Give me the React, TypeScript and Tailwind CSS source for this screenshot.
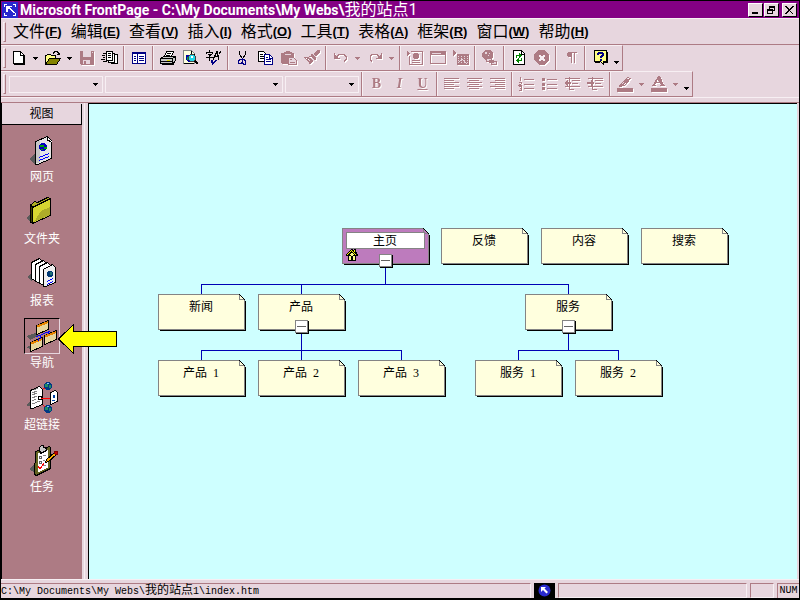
import { ReactNode, useState } from "react"

const SANS = "font-['Liberation_Sans','Noto_Sans_CJK_SC',sans-serif]"
const MONO = "font-['Liberation_Mono','Noto_Sans_CJK_SC',monospace]"

const DIM = "#ad7b84"

const MENUS = [
  ["文件", "F"],
  ["编辑", "E"],
  ["查看", "V"],
  ["插入", "I"],
  ["格式", "O"],
  ["工具", "T"],
  ["表格", "A"],
  ["框架", "R"],
  ["窗口", "W"],
  ["帮助", "H"],
]

type PageNode = {
  name: string
  num?: string
  x: number
  y: number
  home?: boolean
  open?: boolean
}

const NODES: PageNode[] = [
  { name: "主页", x: 253, y: 124, home: true, open: true },
  { name: "反馈", x: 352, y: 124 },
  { name: "内容", x: 452, y: 124 },
  { name: "搜索", x: 552, y: 124 },
  { name: "新闻", x: 69, y: 190 },
  { name: "产品", x: 169, y: 190, open: true },
  { name: "服务", x: 436, y: 190, open: true },
  { name: "产品", num: "1", x: 69, y: 256 },
  { name: "产品", num: "2", x: 169, y: 256 },
  { name: "产品", num: "3", x: 269, y: 256 },
  { name: "服务", num: "1", x: 386, y: 256 },
  { name: "服务", num: "2", x: 486, y: 256 },
]

/* ---------- toolbar pieces ---------- */

function Glyph({ children, dim }: { children: ReactNode; dim?: boolean }) {
  return (
    <svg
      viewBox="0 0 17 16"
      className={`h-4 w-[17px] ${dim ? "drop-shadow-[1px_1px_0_#fff]" : ""}`}
      shapeRendering="crispEdges"
      fill="none"
      stroke={dim ? DIM : "#000"}
    >
      {children}
    </svg>
  )
}

function Tool({ label, dim, children }: { label: string; dim?: boolean; children: ReactNode }) {
  return (
    <button
      type="button"
      aria-label={label}
      title={label}
      disabled={dim}
      className="flex h-6 w-[23px] shrink-0 items-center justify-center"
    >
      <Glyph dim={dim}>{children}</Glyph>
    </button>
  )
}

function Drop({ label, dim, low }: { label: string; dim?: boolean; low?: boolean }) {
  return (
    <button
      type="button"
      aria-label={label}
      disabled={dim}
      className={`flex h-6 w-[11px] shrink-0 justify-center ${low ? "items-end pb-1.5" : "items-center"}`}
    >
      <svg viewBox="0 0 5 3" className="h-[3px] w-[5px]" shapeRendering="crispEdges">
        <path d="M0 0h5v1H0zM1 1h3v1H1zM2 2h1v1H2z" fill={dim ? DIM : "#000"} />
      </svg>
    </button>
  )
}

function Sep() {
  return (
    <div className="flex w-[6px] shrink-0 justify-center self-stretch">
      <div className="w-0.5 border-l border-r border-l-[#ad7b84] border-r-[#f7eff3]" />
    </div>
  )
}

function Grip() {
  return (
    <div className="mr-px ml-0.5 h-5 w-[3px] shrink-0 border border-l-[#f7eff3] border-t-[#f7eff3] border-r-[#ad7b84] border-b-[#ad7b84]" />
  )
}

function Combo({ label, width }: { label: string; width: string }) {
  return (
    <div className={`relative h-[17px] shrink-0 border border-[#f7eff3] ${width}`}>
      <select
        aria-label={label}
        disabled
        className="block h-full w-full appearance-none bg-transparent text-xs"
      />
      <svg
        viewBox="0 0 5 3"
        className="pointer-events-none absolute top-1.5 right-1 h-[3px] w-[5px]"
        shapeRendering="crispEdges"
      >
        <path d="M0 0h5v1H0zM1 1h3v1H1zM2 2h1v1H2z" />
      </svg>
    </div>
  )
}

function StandardBar() {
  return (
    <div
      role="toolbar"
      aria-label="常用"
      className="flex h-[26px] w-fit items-center border-t border-r border-b border-t-[#f7eff3] border-r-[#ad7b84] border-b-[#ad7b84]"
    >
      <Grip />
      <Tool label="新建">
        <path d="M3.5 1.5h7l3 3v9h-10z" fill="#fff" />
        <path d="M10.5 1.5V5h3M14.5 5v9.5h-11" />
      </Tool>
      <Drop label="新建选项" />
      <Tool label="打开">
        <path d="M1.5 13.5v-8h1l1-1h3l1 1h4v3" fill="#ffff84" />
        <path d="M1.5 14.5l4-6h11l-4 6z" fill="#848400" />
        <path d="M9.5 3.5v-1h1v-1h3v1h1v2M12.5 4.5h3M15.5 2.5v2" />
      </Tool>
      <Drop label="打开选项" />
      <Tool label="保存" dim>
        <path d="M2 1h14v14H3l-1-1z" fill={DIM} stroke="none" />
        <path d="M5 1h8v6H5z" fill="#e7d6de" stroke="none" />
        <path d="M5 10h7v4H5zM14 2h1v1h-1z" fill="#e7d6de" stroke="none" />
        <path d="M6 11h2v3H6z" fill={DIM} stroke="none" />
      </Tool>
      <Tool label="发布站点">
        <path d="M10.5 4.5h6v9h-6z" fill="#fff" />
        <path d="M7.5 3.5h6v9h-6z" fill="#fff" />
        <path d="M5.5 1.5h6v9h-6z" fill="#fff" />
        <path d="M7 3.5h3M7 5.5h3M7 7.5h3M2 3.5h3M1 5.5h3M2 7.5h2M0 9.5h4M2 11.5h4" />
      </Tool>
      <Sep />
      <Tool label="文件夹列表">
        <path d="M2.5 2.5h13v11h-13z" fill="#fff" stroke="#000084" />
        <path d="M2 3.5h14M7.5 3v11" stroke="#000084" />
        <path d="M4 6.5h2M4 8.5h2M4 10.5h2" stroke="#000084" />
        <path d="M9 6.5h5M9 8.5h5M9 10.5h5" stroke="#000084" />
      </Tool>
      <Sep />
      <Tool label="打印">
        <path d="M5.5 6.5l2-5h7l-2 5z" fill="#fff" />
        <path d="M8 3.5h4M7 5.5h4" />
        <path d="M1.5 8.5l3-2h12v4l-3 3h-12z" fill="#c6c6c6" />
        <path d="M1.5 8.5h12v5M13.5 8.5l3-2M2 11.5h11M3 14.5h11l2-3" />
        <path d="M8 10.5h3" stroke="#d6d600" />
      </Tool>
      <Tool label="在浏览器中预览">
        <path d="M1.5 .5h8l3 3v10h-11z" fill="#ffffde" stroke="#848484" />
        <path d="M2 13.5h10M9.5 1v3h3" />
        <path d="M4 5h4v7H6l-2-2z" fill="#0000a5" stroke="none" />
        <path d="M5 7h2v3H5z" fill="#00a542" stroke="none" />
        <path d="M8.5 4.5h3l2 2v3l-2 2h-3l-2-2v-3z" fill="#21d6e7" stroke="#424242" />
        <path d="M9 6h2v2H9z" fill="#fff" stroke="none" />
        <path d="M13 11l3 3" strokeWidth="2" />
      </Tool>
      <Tool label="拼写检查">
        <path d="M4.5 0v2M1.5 4V2.5h6V4M3 4.5h3L4.5 6v4h-1M1 7.5h7" />
        <path d="M8 9.5l4-8 2 8M10 6.5h4M16 1l-2 3" />
        <path d="M6 10h2v2h1v-1h1v-1h2v1h-1v1h-1v1H9v1H8v1H7v-2H6z" fill="#000084" stroke="none" />
      </Tool>
      <Sep />
      <Tool label="剪切">
        <path d="M5.5 1v3l3 5M11.5 1v3l-3 5" />
        <path d="M8.5 8v1.5M7 9.5H5.5v1h-1v3h3v-1h1v-3H7M9 9.5h1.5v1h1v4h-2v-1h-1v-2" stroke="#000084" />
      </Tool>
      <Tool label="复制">
        <path d="M1.5 1.5h5l2 2v8h-7z" fill="#fff" />
        <path d="M3 4.5h3M3 6.5h4M3 8.5h4" />
        <path d="M7.5 4.5h5l3 3v7h-8z" fill="#fff" stroke="#000084" />
        <path d="M12.5 5v3h3M9 7.5h2M9 9.5h5M9 11.5h5" stroke="#000084" />
      </Tool>
      <Tool label="粘贴" dim>
        <path d="M1 3h3V2h2V1h4v1h2v1h2v5h-6v6H2l-1-1z" fill={DIM} stroke="none" />
        <path d="M5 4.5h6" stroke="#e7d6de" />
        <path d="M8.5 7.5h5l3 3v4h-8z" fill="#e7d6de" />
        <path d="M10 9.5h2M10 12.5h5" />
      </Tool>
      <Tool label="格式刷" dim>
        <path d="M14 0h3v2l-4 5-3-3z" fill={DIM} stroke="none" />
        <path d="M8 4h2l3 4v2h-2L8 6z" fill={DIM} stroke="none" />
        <path d="M1 7.5h5M2 8.5h1M4 8.5h4M3 9.5h2M6 9.5h3M4 10.5h2M7 10.5h3M5 11.5h5M6 12.5h3M6 13.5h2M6 6.5h2" />
      </Tool>
      <Sep />
      <Tool label="撤消" dim>
        <path d="M2.5 3v5.5H8M5 6.5l2-2h5l2 2v3l-2 2" />
        <path d="M3 5h1v1h1v1h1v1H3z" fill={DIM} stroke="none" />
      </Tool>
      <Drop label="撤消选项" dim />
      <Tool label="恢复" dim>
        <path d="M15.5 3v5.5H10M13 6.5l-2-2H6l-2 2v3l2 2" />
        <path d="M15 5h-1v1h-1v1h-1v1h3z" fill={DIM} stroke="none" />
      </Tool>
      <Drop label="恢复选项" dim />
      <Sep />
      <Tool label="插入组件" dim>
        <path d="M1 1h1v1h1v1h1v1H3v1H2v1H1z" fill={DIM} stroke="none" />
        <path d="M3.5 6v8.5h13v-13H5" />
        <path d="M8 3h4v1h1v4h-1v1H8V8H7V4h1z" fill={DIM} stroke="none" />
        <path d="M6 10.5h8M6 12.5h8" />
      </Tool>
      <Tool label="插入表格" dim>
        <path d="M1.5 1.5h15v12h-15z" />
        <path d="M1 1h16v4H1z" fill={DIM} stroke="none" />
        <path d="M3 3.5h9" stroke="#e7d6de" />
      </Tool>
      <Tool label="插入图片" dim>
        <path d="M1 0l4 3-4 3zM5 4h12v11H5z" fill={DIM} stroke="none" />
        <path
          d="M6 6.5h11M6 8.5h11M6 10.5h11M6 12.5h11"
          stroke="#e7d6de"
          strokeDasharray="1 2"
        />
        <path d="M6 13l4-4 5 5" stroke="#e7d6de" />
      </Tool>
      <Sep />
      <Tool label="超链接" dim>
        <path d="M4 0h5l3 3v4l-3 3H4L1 7V3z" fill={DIM} stroke="none" />
        <path d="M4 2h2v2H4z" fill="#e7d6de" stroke="none" />
        <path d="M8 3h1v1H8zM7 5h1v1H7z" fill="#e7d6de" stroke="none" />
        <path d="M5.5 8.5h5v3h-5zM10.5 11.5h5v3h-5z" fill="#e7d6de" />
        <path d="M8 10h5v3H8z" fill={DIM} stroke="none" />
      </Tool>
      <Sep />
      <Tool label="刷新">
        <path d="M3.5 .5h8l3 3v11h-11z" fill="#fff" />
        <path d="M11.5 1v3h3" />
        <path d="M6 5h3V3h1v1h1v1h1v1h-1v1h-1v1H9V6H7v2H6zM12 11H9v2H8v-1H7v-1H6v-1h1V9h1V8h1v2h2V8h1z" fill="#008400" stroke="none" />
      </Tool>
      <Tool label="停止" dim>
        <path d="M6 0h5l5 4v6l-5 5H6l-5-5V4z" fill={DIM} stroke="none" />
        <path d="M6 5h1v1h1v1h1V6h1V5h1v1h-1v1H9v1h1v1h1v1h-1V9H9V8H8v1H7v1H6V9h1V8h1V7H7V6H6z" fill="#fff" stroke="#f7eff3" />
      </Tool>
      <Sep />
      <Tool label="显示全部" dim>
        <path d="M6 2h9v1H6zM5 3h5v4H6L5 6zM9 3h1v10H9zM12 3h1v10h-1z" fill={DIM} stroke="none" />
      </Tool>
      <Sep />
      <Tool label="帮助">
        <path d="M3.5 .5h12v11h-3v3l-3-3h-6z" fill="#ffff84" />
        <path d="M4 12.5h5M16.5 2v10.5H13" />
        <path d="M6 3h1V2h5v1h1v3h-1v1h-1v1H9V6h1V5h1V4H8v1H6zM9 9h2v2H9z" fill="#000084" stroke="none" />
      </Tool>
      <Drop label="其他按钮" low />
    </div>
  )
}

function FormatBar() {
  const letter =
    "flex h-6 w-[23px] shrink-0 items-center justify-center font-['Liberation_Serif',serif] text-sm font-bold text-[#ad7b84] drop-shadow-[1px_1px_0_#fff]"
  return (
    <div
      role="toolbar"
      aria-label="格式"
      className="flex h-[26px] w-fit items-center border-t border-r border-b border-t-[#f7eff3] border-r-[#ad7b84] border-b-[#ad7b84]"
    >
      <Grip />
      <div className="ml-0.5 flex gap-0.5">
        <Combo label="样式" width="w-[94px]" />
        <Combo label="字体" width="w-[178px]" />
        <Combo label="字号" width="w-[74px]" />
      </div>
      <Sep />
      <button type="button" disabled className={letter}>B</button>
      <button type="button" disabled className={`${letter} italic`}>I</button>
      <button type="button" disabled className={`${letter} underline`}>U</button>
      <Sep />
      <Tool label="左对齐" dim>
        <path d="M1 2.5h15M1 4.5h10M1 6.5h15M1 8.5h10M1 10.5h15M1 12.5h10" />
      </Tool>
      <Tool label="居中" dim>
        <path d="M1 2.5h15M3 4.5h10M1 6.5h15M3 8.5h10M1 10.5h15M3 12.5h10" />
      </Tool>
      <Tool label="右对齐" dim>
        <path d="M1 2.5h15M6 4.5h10M1 6.5h15M6 8.5h10M1 10.5h15M6 12.5h10" />
      </Tool>
      <Sep />
      <Tool label="编号" dim>
        <path d="M6 3.5h10M6 8.5h10M6 12.5h10M2.5 1v4M1 6.5h2.5v1L1.5 9h2M1 10.5h2.5v4H1M2 12.5h1" />
      </Tool>
      <Tool label="项目符号" dim>
        <path d="M6 3.5h10M6 8.5h10M6 12.5h10" />
        <path d="M1 2h3v3H1zM1 7h3v3H1zM1 11h3v3H1z" fill={DIM} stroke="none" />
      </Tool>
      <Tool label="减少缩进" dim>
        <path d="M1 2.5h15M8 4.5h8M8 7.5h6M1 10.5h15M5 13.5h5M5.5 1v13" />
        <path d="M0 7l4-3v2h3v2H4v2z" fill={DIM} stroke="none" />
      </Tool>
      <Tool label="增加缩进" dim>
        <path d="M1 2.5h15M8 4.5h8M8 7.5h6M1 10.5h15M5 13.5h5M5.5 1v13" />
        <path d="M7 7L4 4v2H0v2h4v2z" fill={DIM} stroke="none" />
      </Tool>
      <Sep />
      <Tool label="突出显示" dim>
        <path d="M1 12h16v4H1z" fill={DIM} stroke="none" />
        <path d="M5.5 7.5l6-6 3 1-6 7-5 1z" />
        <path d="M4 8h4v2H3zM10 3h3L9 8H7z" fill={DIM} stroke="none" />
      </Tool>
      <Drop label="突出显示颜色" dim />
      <Tool label="字体颜色" dim>
        <path d="M1 12h16v4H1z" fill={DIM} stroke="none" />
        <path d="M8 0h2l4 9h1v1h-5V9h1l-1-2H6L5 9h1v1H2V9h1zM8 3L7 6h2z" fill={DIM} stroke="none" />
      </Tool>
      <Drop label="字体颜色选项" dim />
      <Drop label="其他按钮" low />
    </div>
  )
}

/* ---------- views bar icons ---------- */

function Globe({ x, y, r }: { x: number; y: number; r: number }) {
  return (
    <g>
      <circle cx={x} cy={y} r={r} fill="#003984" />
      <path d={`M${x - r + 1} ${y - 2}h3v3h-3zM${x + 1} ${y - 1}h2v3h-2z`} fill="#218c63" />
      <path d={`M${x - 1} ${y - r + 1}h2v1h-2z`} fill="#84c6ff" />
    </g>
  )
}

const ICONS: Record<string, ReactNode> = {
  page: (
    <>
      <path d="M5 27l6-5v10z" fill="#5a5a5a" />
      <path d="M11.5 9.5l12-5 4 4v18l-14 6h-2z" fill="#e7e7e7" stroke="#000" />
      <path d="M12 10l4-2v22l-3 1h-1z" fill="#c6c6c6" />
      <path d="M23.5 4.5v4l4 1" fill="#fff" stroke="#000" />
      <circle cx="19" cy="15" r="4" fill="#0000bd" />
      <path d="M16 13h4v2h-4zM20 15h3v2h-3zM17 17h2v1h-2z" fill="#00a500" />
      <path d="M15 25.5l10-4M15 28.5l10-4" stroke="#0000ff" />
    </>
  ),
  folder: (
    <>
      <path d="M2 24l5-4v8z" fill="#5a5a5a" />
      <path d="M6.5 11.5l4-4 3 1 10-5 3 1v6l-19 6z" fill="#adad21" stroke="#000" />
      <path d="M8.5 13.5l18-9v17l-18 8z" fill="#d6d631" stroke="#000" />
      <path d="M17 17l9-4v8l-16 7z" fill="#adad29" />
      <path d="M6.5 11v17l2 1V13z" fill="#424200" stroke="#000" />
    </>
  ),
  reports: (
    <>
      <path d="M3 21l5-4v9z" fill="#5a5a5a" />
      <path d="M7.5 6.5l8-4 3 3v15l-8 4-3-2z" fill="#fff" stroke="#000" />
      <path d="M11.5 8.5l8-4 3 3v15l-8 4-3-1z" fill="#fff" stroke="#000" />
      <path d="M15.5 10.5l8-4 3 3v15l-8 4-3-1z" fill="#fff" stroke="#000" />
      <path d="M19.5 13.5l9-5 3 3v15l-10 4h-2z" fill="#efefef" stroke="#000" />
      <circle cx="26" cy="18" r="3" fill="#003973" />
      <path d="M26 16h2v3h-2z" fill="#217373" />
      <path d="M23 25.5l6-3M23 28.5l6-3" stroke="#0000ff" />
    </>
  ),
  nav: (
    <>
      <path d="M2 18l9-3 3 3-8 4zM2 30l5-3v4z" fill="#5a5a5a" />
      <path
        d="M12.5 7.5l12-5v9l-12 5zM20.5 17.5l12-5v9l-12 5zM6.5 24.5l12-5v9l-12 5z"
        fill="#e7d69c"
        stroke="#000"
      />
      <path d="M13 8.5L24 4M21 18.5L32 14M7 25.5L18 21" stroke="#e78400" strokeWidth="2" />
      <path d="M12 19l14-6M16 17v4M14 20v3M24 13v3" stroke="#0000ff" />
    </>
  ),
  links: (
    <>
      <path d="M2 25l5-4v6z" fill="#5a5a5a" />
      <path d="M15 12l7-5M15 18h11M15 22l8 6" stroke="#ff0000" />
      <path d="M6.5 10.5l9-4 3 3v15l-10 4h-2z" fill="#fff" stroke="#000" />
      <path d="M8 13l5-2M8 15l5-2M8 18l5-2M8 21l4-2M8 24l8-3M10 10l4-2" stroke="#848484" />
      <path d="M14.5 16.5h3v3h-3z" fill="#fff" stroke="#000" />
      <path d="M17 18h9" stroke="#ff0000" />
      <Globe x={24} y={6} r={4} />
      <Globe x={24} y={29} r={4} />
      <path d="M26.5 12.5l5-2 2 2v9l-7 3z" fill="#fff" stroke="#000" />
      <path d="M29 15h2v3h-2zM28 20h3v1h-3z" fill="#0042a5" />
    </>
  ),
  tasks: (
    <>
      <path d="M5 27l6-5v9z" fill="#5a5a5a" />
      <path d="M11.5 9.5l14-5 1 1v21l-14 7-2-1z" fill="#636321" stroke="#000" />
      <path d="M13.5 11.5l10-4v18l-10 5z" fill="#fff" />
      <path d="M15.5 7.5v-2l2-2h2v2l3 1v2l-6 3z" fill="#c6c6c6" stroke="#000" />
      <path d="M15.5 14.5h2v2h-2zM15.5 19.5h2v2h-2z" stroke="#636363" />
      <path d="M19 14l3-1M19 19l2-1M19 24l3-1" stroke="#848484" />
      <path d="M14 24l2 3 4-6" stroke="#ff0000" />
      <path d="M21.5 20.5l1-3 8-7 2 2-8 7z" fill="#ffad00" stroke="#000" />
      <path d="M30 9h3v3h-2z" fill="#c60000" stroke="#840000" />
    </>
  ),
}

const VIEWS = [
  { id: "page", label: "网页" },
  { id: "folder", label: "文件夹" },
  { id: "reports", label: "报表" },
  { id: "nav", label: "导航" },
  { id: "links", label: "超链接" },
  { id: "tasks", label: "任务" },
]

function ViewsBar({ view, onPick }: { view: string; onPick: (id: string) => void }) {
  return (
    <nav className="flex w-20 shrink-0 flex-col bg-[#ad7b84]">
      <h2 className="h-[21px] border-r border-b border-black bg-[#e7d6de] text-center text-xs leading-5">
        视图
      </h2>
      <ul className="flex flex-col gap-[9px] pt-[7px]">
        {VIEWS.map((v) => (
          <li key={v.id} className="relative">
            <button
              type="button"
              onClick={() => onPick(v.id)}
              aria-pressed={view === v.id}
              className="flex w-full flex-col items-center gap-px text-xs leading-4 text-white"
            >
              <span
                className={`block h-9 w-9 border ${
                  view === v.id
                    ? "border-t-black border-l-black border-r-[#e7d6de] border-b-[#e7d6de]"
                    : "border-transparent"
                }`}
              >
                <svg viewBox="1 1 34 34" className="h-full w-full" shapeRendering="crispEdges" fill="none">
                  {ICONS[v.id]}
                </svg>
              </span>
              {v.label}
            </button>
            {v.id === "nav" && (
              <svg
                viewBox="0 0 60 31"
                className="pointer-events-none absolute top-1.5 left-14 z-10 h-[31px] w-[60px]"
                shapeRendering="crispEdges"
              >
                <path d="M.5 15L15.5 .5v7h43v15h-43v7z" fill="#ffff00" stroke="#000" />
              </svg>
            )}
          </li>
        ))}
      </ul>
    </nav>
  )
}

/* ---------- navigation canvas ---------- */

function NodeCard({ node }: { node: PageNode }) {
  const fill = node.home ? "#bd7bbd" : "#ffffde"
  return (
    <div className="absolute" style={{ left: node.x, top: node.y }}>
      <button type="button" className="relative block h-[37px] w-[88px] text-xs leading-4">
        <svg viewBox="0 0 88 37" className="absolute inset-0 h-full w-full" shapeRendering="crispEdges">
          <path d="M.5 .5h81l5 5v30H.5z" fill={fill} stroke="#848484" />
          <path d="M2 36.5h86M87.5 7v30" stroke="#000" />
          <path d="M81.5 .5v5h5" fill={fill} stroke="#848484" />
          <path d="M81.5 .5l6 6" stroke="#000" />
          {node.home && <path d="M4.5 4.5h78v16h-78z" fill="#fff" stroke="#848484" />}
          {node.home && (
            <g>
              <path d="M6 27h8v6H6z" />
              <path d="M7 27h6v5H7z" fill="#ffff84" />
              <path d="M9 28h2v4H9z" />
              <path d="M9 21h2v1h1v-1h2v3h1v2h1v2H4v-2h1v-1h1v-1h1v-1h1v-1h1z" />
              <path
                d="M9 22h1v1H9zM8 23h1v1H8zM10 23h1v1h-1zM7 24h1v1H7zM11 24h1v1h-1zM6 25h1v1H6zM12 25h1v1h-1zM5 26h1v1H5zM13 26h1v1h-1zM12 22h1v2h-1z"
                fill="#ffff00"
              />
              <path d="M9 25h2v3H9zM8 26h4v1H8z" fill="#ffff84" />
            </g>
          )}
        </svg>
        <span className="relative block h-full pt-[5px] pr-0.5">
          {node.name}
          {node.num && <span className="ml-1.5 font-['Liberation_Serif',serif]">{node.num}</span>}
        </span>
      </button>
      {node.open && (
        <button
          type="button"
          aria-label="折叠"
          className="absolute top-[26px] left-[37px] flex h-[13px] w-[13px] items-center justify-center border border-[#848484] bg-white shadow-[1px_1px_0_#000]"
        >
          <span className="h-px w-[9px] bg-[#636363]" />
        </button>
      )}
    </div>
  )
}

function Canvas() {
  return (
    <main className="relative min-w-0 flex-1 overflow-hidden border-t border-l border-black bg-[#ceffff]">
      <svg
        className="absolute inset-0 h-full w-full"
        fill="none"
        stroke="#0000b5"
        shapeRendering="crispEdges"
      >
        <path d="M296.5 160v20M112.5 190v-9.5h367v9.5M212.5 180v10" />
        <path d="M212.5 228v28M112.5 256v-9.5h200v9.5" />
        <path d="M479.5 228v18M429.5 256v-9.5h100v9.5" />
      </svg>
      {NODES.map((n) => (
        <NodeCard key={`${n.name}${n.num ?? ""}`} node={n} />
      ))}
    </main>
  )
}

/* ---------- window chrome ---------- */

function CaptionButton({ label, children }: { label: string; children: ReactNode }) {
  return (
    <button
      type="button"
      aria-label={label}
      className="flex h-3.5 w-[15px] items-center justify-center border border-t-white border-l-white border-r-black border-b-black bg-[#e7d6de]"
    >
      <svg viewBox="0 0 11 10" className="h-2.5 w-[11px]" shapeRendering="crispEdges" fill="none" stroke="#000">
        {children}
      </svg>
    </button>
  )
}

function TitleBar() {
  return (
    <header className="flex h-[17px] shrink-0 items-center bg-[#840084] pr-0.5 pl-px text-white">
      <svg viewBox="0 0 16 16" className="h-4 w-4 shrink-0" shapeRendering="crispEdges" fill="none" stroke="#fff">
        <path d="M0 0h16v16H0z" fill="#2929ce" stroke="none" />
        <path d="M2.5 5V2.5H5M11 2.5h2.5V5M13.5 11v2.5H11M5 13.5H2.5V11" />
        <path d="M4 4h6v1H8v1h1v1h1v1h1v1h1v1h1v1h-2v-1h-1V9H9V8H8V7H6v3H4z" fill="#fff" stroke="none" />
      </svg>
      <h1 className="ml-0.5 flex-1 font-['Roboto','Noto_Sans_CJK_SC',sans-serif] text-sm leading-4 font-bold whitespace-nowrap">
        Microsoft FrontPage - C:\My Documents\My Webs\
        <span className="text-base leading-4 font-normal">我的站点1</span>
      </h1>
      <div className="flex">
        <CaptionButton label="最小化">
          <path d="M2 8h6" strokeWidth="2" />
        </CaptionButton>
        <div className="w-px" />
        <CaptionButton label="还原">
          <path d="M3.5 4V1.5h5v4H7M3 2.5h6M1.5 4.5h5v4h-5zM1 5.5h6" />
        </CaptionButton>
        <div className="w-[3px]" />
        <CaptionButton label="关闭">
          <path
            d="M1 1h2v1h1v1h1v1h1V3h1V2h1V1h2v1H9v1H8v1H7v1H6v1h1v1h1v1h1v1H8V8H7V7H6V6H5v1H4v1H3v1H1V8h1V7h1V6h1V5H4V4H3V3H2V2H1z"
            fill="#000"
            stroke="none"
          />
        </CaptionButton>
      </div>
    </header>
  )
}

function MenuBar() {
  return (
    <div className="flex h-[27px] shrink-0 items-center border-t border-b border-t-[#f7eff3] border-b-[#ad7b84]">
      <Grip />
      <div className="ml-1.5 flex gap-[9px]">
        {MENUS.map(([name, key]) => (
          <button key={key} type="button" className="flex items-center text-base leading-5 whitespace-nowrap">
            {name}
            <span className="text-[13px] leading-5 font-bold">
              (<u>{key}</u>)
            </span>
          </button>
        ))}
      </div>
    </div>
  )
}

function StatusBar() {
  const cell = "border border-t-[#ad7b84] border-l-[#ad7b84] border-r-[#f7eff3] border-b-[#f7eff3]"
  return (
    <footer className="flex h-[15px] shrink-0 gap-[3px] text-xs leading-[14px]">
      <div
        className={`min-w-0 flex-[535] border-t border-r border-t-[#ad7b84] border-r-[#f7eff3] whitespace-nowrap ${MONO}`}
      >
        <span className="text-[10px]">C:\My Documents\My Webs\</span>
        我的站点
        <span className="text-[10px]">1\index.htm</span>
      </div>
      <div className="flex w-[21px] shrink-0 items-center justify-center bg-black">
        <svg viewBox="0 0 13 13" className="h-[13px] w-[13px]">
          <circle cx="6.5" cy="6.5" r="6" fill="#2929ce" />
          <path d="M3 3h5L6.5 4.5 10 8 8.5 9.5 5 6 3 8z" fill="#fff" />
        </svg>
      </div>
      <div className={`flex-[189] ${cell}`} />
      <div className={`w-6 shrink-0 ${cell}`} />
      <div className={`w-[22px] shrink-0 border-t border-l border-[#ad7b84] text-center text-[10px] ${MONO}`}>
        NUM
      </div>
    </footer>
  )
}

export default function App() {
  const [view, setView] = useState("nav")

  return (
    <div className={`flex h-screen flex-col border border-b-2 border-black bg-[#e7d6de] text-black ${SANS}`}>
      <TitleBar />
      <MenuBar />
      <StandardBar />
      <FormatBar />
      <div className="h-1.5 shrink-0 border-t border-b border-t-[#f7eff3] border-b-[#ad7b84]" />
      <div className="flex min-h-0 flex-1 pr-0.5">
        <div className="flex border-l border-black pt-px">
          <ViewsBar view={view} onPick={setView} />
        </div>
        <div className="mr-px ml-0.5 w-[3px] shrink-0 border-l border-[#f7eff3]" />
        <Canvas />
      </div>
      <div className="h-1 shrink-0 border-t border-[#f7eff3]" />
      <StatusBar />
    </div>
  )
}
